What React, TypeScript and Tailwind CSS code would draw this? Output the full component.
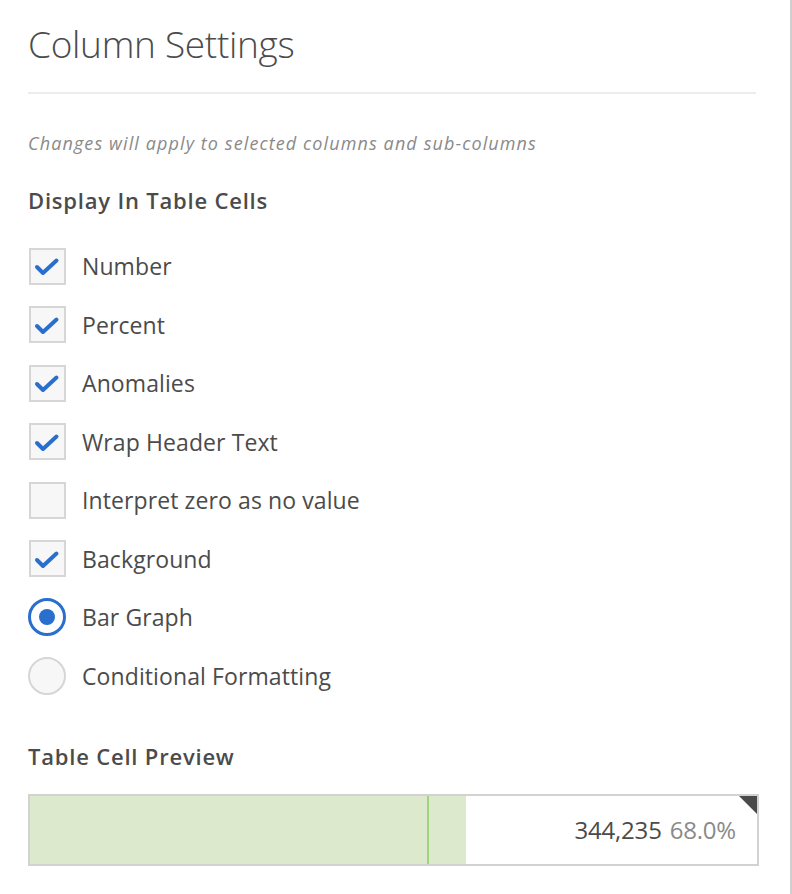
import React from 'react';

type Option = { label: string; kind: 'check' | 'radio'; on: boolean };

const options: Option[] = [
  { label: 'Number', kind: 'check', on: true },
  { label: 'Percent', kind: 'check', on: true },
  { label: 'Anomalies', kind: 'check', on: true },
  { label: 'Wrap Header Text', kind: 'check', on: true },
  { label: 'Interpret zero as no value', kind: 'check', on: false },
  { label: 'Background', kind: 'check', on: true },
  { label: 'Bar Graph', kind: 'radio', on: true },
  { label: 'Conditional Formatting', kind: 'radio', on: false },
];

function CheckBox({ on }: { on: boolean }) {
  return (
    <div className="w-[37px] h-[37px] border-2 border-[#d6d6d6] bg-[#f7f7f7] flex items-center justify-center shrink-0">
      {on && (
        <svg width="26" height="22" viewBox="0 0 26 22" fill="none">
          <path d="M3 12 L9 18 L22.5 5.5" stroke="#2b6fce" strokeWidth="4" strokeLinecap="round" strokeLinejoin="round" />
        </svg>
      )}
    </div>
  );
}

function Radio({ on }: { on: boolean }) {
  return (
    <div
      className={
        'w-[38px] h-[38px] rounded-full flex items-center justify-center shrink-0 ' +
        (on ? 'border-[3px] border-[#2b6fce] bg-white' : 'border-2 border-[#d6d6d6] bg-[#f7f7f7]')
      }
    >
      {on && <div className="w-[16px] h-[16px] rounded-full bg-[#2b6fce]" />}
    </div>
  );
}

export default function App() {
  return (
    <div
      className="w-[792px] h-[894px] bg-white border-r-2 border-[#cfcfcf] text-[#4b4b4b] overflow-hidden"
      style={{ fontFamily: '"Open Sans", "Liberation Sans", sans-serif' }}
    >
      <div className="px-[28px] pr-[34px]">
        <h1 className="pt-[19px] text-[37px] leading-[50px] font-light text-[#4b4b4b] tracking-[-0.3px]">
          Column Settings
        </h1>
        <div className="mt-[23px] h-[2px] bg-[#ececec]" />

        <p className="mt-[37px] text-[18px] leading-[24px] italic text-[#8a8a8a] tracking-[1.1px]">
          Changes will apply to selected columns and sub-columns
        </p>

        <h2 className="mt-[30px] text-[22px] leading-[30px] font-semibold text-[#4b4b4b] tracking-[0.8px]">
          Display In Table Cells
        </h2>

        <div className="mt-[22px] flex flex-col">
          {options.map((o) => (
            <div key={o.label} className="flex items-center gap-[16px] h-[58.5px]">
              <div className="w-[38px] flex justify-center">
                {o.kind === 'check' ? <CheckBox on={o.on} /> : <Radio on={o.on} />}
              </div>
              <span className="text-[23px] leading-[30px] text-[#4b4b4b] tracking-[0.1px]">{o.label}</span>
            </div>
          ))}
        </div>

        <h2 className="mt-[36px] text-[22px] leading-[30px] font-semibold text-[#4b4b4b] tracking-[0.8px]">
          Table Cell Preview
        </h2>

        <div className="mt-[23px] relative w-[731px] h-[72px] border-2 border-[#d2d2d2] bg-white flex items-center justify-end">
          <div className="absolute left-0 top-0 bottom-0 w-[436px] bg-[#dce9cc]" />
          <div className="absolute top-0 bottom-0 left-[397px] w-[2px] bg-[#a3d27e]" />
          <div className="absolute top-0 right-0 w-0 h-0 border-t-[18px] border-l-[18px] border-t-[#4a4a4a] border-l-transparent" />
          <div className="relative pr-[21px] text-[24px] leading-[30px] tracking-[-0.2px]">
            <span className="text-[#4b4b4b]">344,235</span>
            <span className="ml-[8px] text-[#8a8a8a]">68.0%</span>
          </div>
        </div>
      </div>
    </div>
  );
}
